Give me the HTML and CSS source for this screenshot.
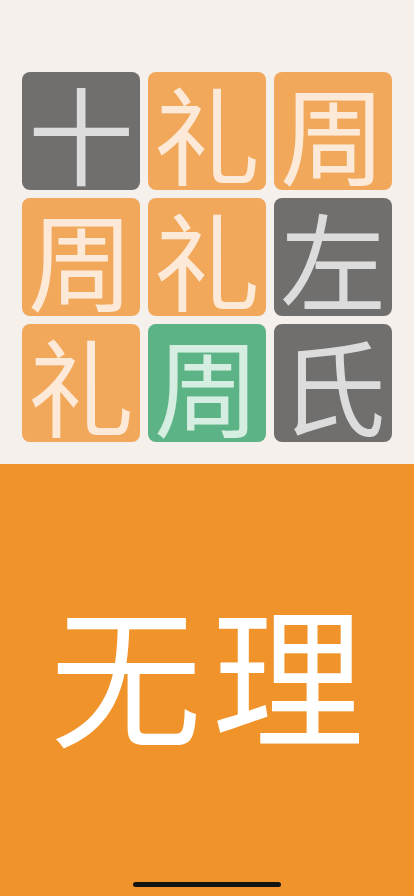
FILE: index.html
```html
<!DOCTYPE html>
<html lang="zh">
<head>
<meta charset="utf-8">
<meta name="viewport" content="width=device-width, initial-scale=1">
<title>无理</title>
<link rel="stylesheet" href="styles.css">
</head>
<body>
<div class="screen">
  <section class="board">
    <div class="grid">
      <div class="tile gray"><span class="glyph">十</span></div>
      <div class="tile orange"><span class="glyph">礼</span></div>
      <div class="tile orange"><span class="glyph">周</span></div>
      <div class="tile orange"><span class="glyph">周</span></div>
      <div class="tile orange"><span class="glyph">礼</span></div>
      <div class="tile gray"><span class="glyph">左</span></div>
      <div class="tile orange"><span class="glyph">礼</span></div>
      <div class="tile green"><span class="glyph">周</span></div>
      <div class="tile gray"><span class="glyph">氏</span></div>
    </div>
  </section>
  <section class="answer">
    <div class="word">无理</div>
    <div class="home-bar"></div>
  </section>
</div>
</body>
</html>
```
FILE: styles.css
```css
html, body {
  margin: 0;
  padding: 0;
}
body {
  width: 414px;
  height: 896px;
  overflow: hidden;
  font-family: "Noto Sans CJK SC", "Noto Sans CJK JP", sans-serif;
}
.screen {
  display: flex;
  flex-direction: column;
  height: 896px;
}
.board {
  background: #f5f0eb;
  height: 464px;
  box-sizing: border-box;
  padding: 72px 22px 0 22px;
}
.grid {
  display: grid;
  grid-template-columns: repeat(3, 118px);
  grid-auto-rows: 118px;
  gap: 8px;
}
.tile {
  border-radius: 8px;
  display: flex;
  align-items: center;
  justify-content: center;
}
.glyph {
  display: block;
  font-size: 106px;
  line-height: 106px;
  height: 106px;
  font-weight: 400;
}
.tile.gray {
  background: #716f6d;
  color: #dcdcdc;
}
.tile.orange {
  background: #f1a85a;
  color: #fde9d8;
}
.tile.green {
  background: #5bb386;
  color: #d6ede1;
}
.answer {
  flex: 1;
  background: #f1932b;
  position: relative;
  display: flex;
  align-items: center;
  justify-content: center;
}
.word {
  color: #ffffff;
  font-size: 152px;
  line-height: 1;
  font-weight: 400;
  letter-spacing: 10px;
  padding-left: 10px;
  margin-bottom: 20px;
}
.home-bar {
  position: absolute;
  left: 133px;
  bottom: 9px;
  width: 148px;
  height: 5px;
  border-radius: 3px;
  background: #141414;
}
```
